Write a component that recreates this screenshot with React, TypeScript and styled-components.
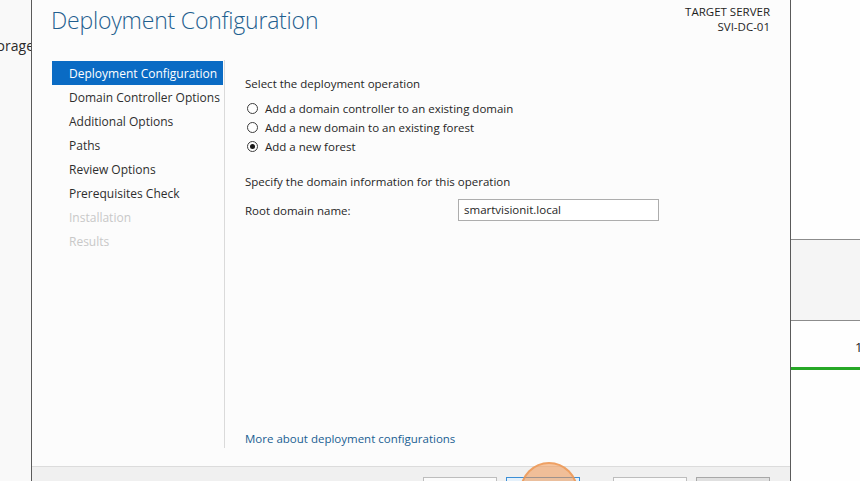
import React from 'react';
import styled, { createGlobalStyle } from 'styled-components';

const GlobalStyle = createGlobalStyle`
  html, body {
    margin: 0;
    padding: 0;
    background: #f9f9f9;
    font-family: "Open Sans", "Noto Sans", sans-serif;
  }
`;

const navItems = [
  { label: 'Deployment Configuration', state: 'active' },
  { label: 'Domain Controller Options', state: 'normal' },
  { label: 'Additional Options', state: 'normal' },
  { label: 'Paths', state: 'normal' },
  { label: 'Review Options', state: 'normal' },
  { label: 'Prerequisites Check', state: 'normal' },
  { label: 'Installation', state: 'disabled' },
  { label: 'Results', state: 'disabled' },
] as const;

const operations = [
  { label: 'Add a domain controller to an existing domain', checked: false },
  { label: 'Add a new domain to an existing forest', checked: false },
  { label: 'Add a new forest', checked: true },
];

const App: React.FC = () => {
  return (
    <Page>
      <GlobalStyle />
      <BackStrip>
        <BackLabel>Storage</BackLabel>
      </BackStrip>

      <Dialog>
        <Header>
          <Title>Deployment Configuration</Title>
          <TargetServer>
            <div>TARGET SERVER</div>
            <div>SVI-DC-01</div>
          </TargetServer>
        </Header>

        <Body>
          <Nav>
            {navItems.map((item) => (
              <NavItem key={item.label} $state={item.state}>
                {item.label}
              </NavItem>
            ))}
          </Nav>

          <Content>
            <SectionLabel>Select the deployment operation</SectionLabel>
            <RadioList>
              {operations.map((op) => (
                <RadioRow key={op.label}>
                  <RadioCircle $checked={op.checked} />
                  {op.label}
                </RadioRow>
              ))}
            </RadioList>

            <SectionLabel $gap>Specify the domain information for this operation</SectionLabel>
            <FieldRow>
              <FieldLabel>Root domain name:</FieldLabel>
              <TextBox>smartvisionit.local</TextBox>
            </FieldRow>

            <MoreLink>More about deployment configurations</MoreLink>
          </Content>
        </Body>

        <Footer>
          <FooterButton>&lt; Previous</FooterButton>
          <FooterButton $variant="default">Next &gt;</FooterButton>
          <ButtonGap />
          <FooterButton>Install</FooterButton>
          <FooterButton $variant="disabled">Cancel</FooterButton>
          <ClickMarker />
        </Footer>
      </Dialog>

      <SidePanel>
        <SideTop />
        <SideBand />
        <SideRow>1</SideRow>
        <SideProgress />
      </SidePanel>
    </Page>
  );
};

const Page = styled.div`
  display: flex;
  width: 860px;
  height: 481px;
  overflow: hidden;
  background: #f9f9f9;
`;

const BackStrip = styled.div`
  width: 31px;
  flex: none;
  display: flex;
  justify-content: flex-end;
  overflow: hidden;
  padding-top: 36px;
  box-sizing: border-box;
`;

const BackLabel = styled.div`
  font-size: 14px;
  color: #2b2b2b;
  white-space: nowrap;
  margin-right: -3px;
  height: 18px;
`;

const Dialog = styled.div`
  position: relative;
  width: 760px;
  flex: none;
  display: flex;
  flex-direction: column;
  background: #fcfcfc;
  border-left: 1px solid #5a5a5a;
  border-right: 1px solid #5a5a5a;
  box-sizing: border-box;
`;

const Header = styled.div`
  display: flex;
  justify-content: space-between;
  align-items: flex-start;
  height: 60px;
  flex: none;
  padding: 0 20px 0 19px;
  box-sizing: border-box;
`;

const Title = styled.h1`
  margin: 4px 0 0;
  font-size: 23px;
  font-weight: 300;
  color: #1f5f8f;
  letter-spacing: -0.2px;
  line-height: 32px;
`;

const TargetServer = styled.div`
  margin-top: 4px;
  text-align: right;
  font-size: 11.5px;
  line-height: 15px;
  color: #1e1e1e;
`;

const Body = styled.div`
  flex: 1;
  display: flex;
  min-height: 0;
  padding-bottom: 18px;
`;

const Nav = styled.div`
  width: 171px;
  margin-left: 20px;
  flex: none;
  border-right: 1px solid #dadada;
  padding: 1px 1px 0 0;
`;

const NavItem = styled.div<{ $state: 'active' | 'normal' | 'disabled' }>`
  height: 24px;
  line-height: 25px;
  padding-left: 17px;
  font-size: 12px;
  white-space: nowrap;
  color: ${({ $state }) =>
    $state === 'active' ? '#ffffff' : $state === 'disabled' ? '#c8c8c8' : '#2e2e2e'};
  background: ${({ $state }) => ($state === 'active' ? '#0a6bc4' : 'transparent')};
`;

const Content = styled.div`
  flex: 1;
  display: flex;
  flex-direction: column;
  padding: 15px 0 0 20px;
  font-size: 11.5px;
  color: #262626;
`;

const SectionLabel = styled.div<{ $gap?: boolean }>`
  line-height: 17px;
  margin-top: ${({ $gap }) => ($gap ? '17px' : '0')};
`;

const RadioList = styled.div`
  display: flex;
  flex-direction: column;
  margin-top: 7px;
`;

const RadioRow = styled.div`
  display: flex;
  align-items: center;
  gap: 7px;
  height: 19px;
  padding-left: 2px;
`;

const RadioCircle = styled.span<{ $checked: boolean }>`
  position: relative;
  width: 11px;
  height: 11px;
  border-radius: 50%;
  border: 1px solid #3d3d3d;
  background: #ffffff;
  box-sizing: border-box;

  &::after {
    content: '';
    display: ${({ $checked }) => ($checked ? 'block' : 'none')};
    position: absolute;
    left: 2px;
    top: 2px;
    width: 5px;
    height: 5px;
    border-radius: 50%;
    background: #1a1a1a;
  }
`;

const FieldRow = styled.div`
  display: flex;
  align-items: center;
  margin-top: 9px;
`;

const FieldLabel = styled.div`
  width: 213px;
`;

const TextBox = styled.div`
  width: 201px;
  height: 22px;
  line-height: 20px;
  border: 1px solid #adadad;
  background: #ffffff;
  padding-left: 5px;
  box-sizing: border-box;
`;

const MoreLink = styled.div`
  margin-top: auto;
  margin-bottom: 1px;
  color: #1a5e92;
  line-height: 17px;
`;

const Footer = styled.div`
  position: relative;
  height: 15px;
  flex: none;
  box-sizing: border-box;
  display: flex;
  gap: 9px;
  padding: 10px 20px 0 0;
  justify-content: flex-end;
  background: #f0f0f0;
  border-top: 1px solid #dcdcdc;
`;

const FooterButton = styled.div<{ $variant?: 'default' | 'disabled' }>`
  width: 74px;
  height: 23px;
  flex: none;
  box-sizing: border-box;
  font-size: 12px;
  text-align: center;
  line-height: 25px;
  color: #1e1e1e;
  border: 1px solid
    ${({ $variant }) =>
      $variant === 'default' ? '#3c8fd6' : $variant === 'disabled' ? '#a8a8a8' : '#bdbdbd'};
  background: ${({ $variant }) =>
    $variant === 'default' ? '#e5f1fb' : $variant === 'disabled' ? '#e0e0e0' : '#fbfbfb'};
`;

const ButtonGap = styled.div`
  width: 15px;
  flex: none;
`;

const ClickMarker = styled.div`
  position: absolute;
  left: 488px;
  top: -5px;
  width: 58px;
  height: 58px;
  border-radius: 50%;
  background: rgba(240, 150, 80, 0.55);
  border: 2px solid rgba(236, 150, 80, 0.75);
  box-sizing: border-box;
`;

const SidePanel = styled.div`
  flex: 1;
  display: flex;
  flex-direction: column;
  background: #fefefe;
`;

const SideTop = styled.div`
  height: 239px;
  flex: none;
  border-bottom: 1px solid #8c8c8c;
`;

const SideBand = styled.div`
  height: 80px;
  flex: none;
  background: #f5f5f5;
  border-bottom: 1px solid #8c8c8c;
`;

const SideRow = styled.div`
  height: 46px;
  flex: none;
  padding-left: 64px;
  line-height: 52px;
  font-size: 13px;
  color: #222;
  white-space: nowrap;
  overflow: hidden;
`;

const SideProgress = styled.div`
  height: 3px;
  flex: none;
  background: #26a826;
`;

export default App;
